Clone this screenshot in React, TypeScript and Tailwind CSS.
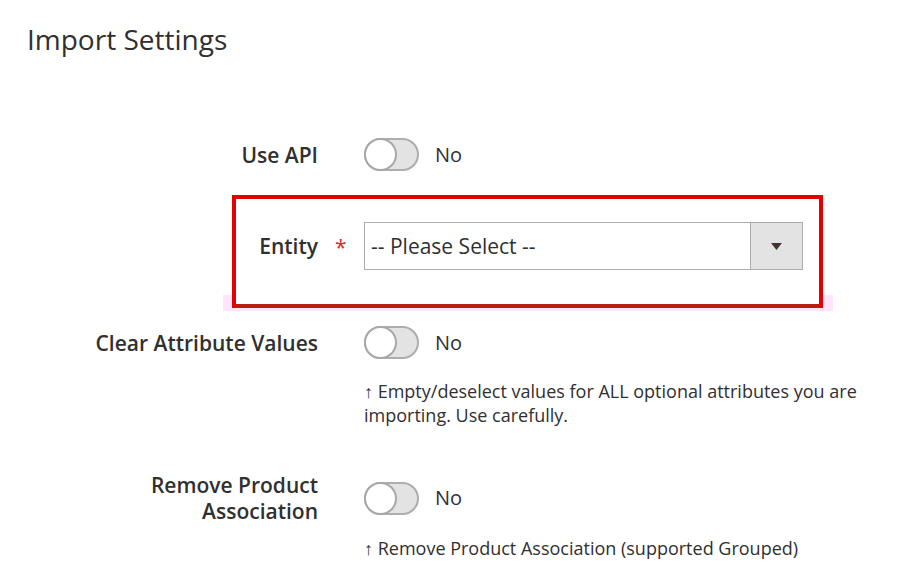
import React from "react";

const font = { fontFamily: '"Open Sans", "Noto Sans", Arial, sans-serif' };

function Toggle() {
  return (
    <div className="flex items-center">
      <div className="flex items-center w-[55px] h-[33px] rounded-full border-2 border-[#adadad] bg-[#e3e3e3]">
        <div className="-ml-[2px] w-[33px] h-[33px] rounded-full bg-white border-2 border-[#a8a8a8]" />
      </div>
      <span className="ml-[16px] text-[20px] text-[#303030] leading-none">No</span>
    </div>
  );
}

function Label({ children }: { children: React.ReactNode }) {
  return (
    <div className="w-[318px] shrink-0 text-right text-[21px] font-semibold text-[#303030] leading-[26px]">
      {children}
    </div>
  );
}

function Note({ children }: { children: React.ReactNode }) {
  return (
    <div className="ml-[364px] w-[500px] text-[18px] leading-[24px] text-[#303030]">
      {children}
    </div>
  );
}

export default function App() {
  return (
    <div className="w-[909px] h-[587px] bg-white overflow-hidden relative" style={font}>
      <div className="pt-[21px] pl-[27px] text-[28px] leading-[36px] text-[#303030]">Import Settings</div>

      <div className="mt-[81px] flex items-center h-[33px]">
        <Label>Use API</Label>
        <div className="ml-[46px]">
          <Toggle />
        </div>
      </div>

      <div className="relative mt-[24px]">
        <div className="absolute left-[223px] top-[100px] w-[610px] h-[16px] bg-[#fde6fb]" />
        <div className="relative ml-[232px] w-[591px] h-[113px] bg-white border-4 border-[#e30000] border-b-[#b3200c] pt-[23px] flex items-start">
          <div className="w-[82px] shrink-0 text-right text-[21px] font-semibold text-[#303030] leading-[48px] relative">
            Entity
            <span className="absolute left-[99px] top-[1px] text-[#e22626] font-normal">*</span>
          </div>
          <div className="ml-[46px] w-[439px] h-[48px] border border-[#adadad] flex items-stretch">
            <div className="flex-1 pl-[6px] text-[21px] text-[#303030] leading-[46px]">-- Please Select --</div>
            <div className="w-[52px] bg-[#e3e3e3] border-l border-[#adadad] flex items-center justify-center">
              <svg width="11" height="7" viewBox="0 0 11 7">
                <path d="M0 0 L11 0 L5.5 7 Z" fill="#41362f" />
              </svg>
            </div>
          </div>
        </div>
      </div>

      <div className="mt-[18px] flex items-center h-[33px]">
        <Label>Clear Attribute Values</Label>
        <div className="ml-[46px]">
          <Toggle />
        </div>
      </div>
      <div className="mt-[20px]">
        <Note>↑ Empty/deselect values for ALL optional attributes you are importing. Use carefully.</Note>
      </div>

      <div className="mt-[45px] flex items-center">
        <Label>
          Remove Product
          <br />
          Association
        </Label>
        <div className="ml-[46px]">
          <Toggle />
        </div>
      </div>
      <div className="mt-[12px]">
        <Note>↑ Remove Product Association (supported Grouped)</Note>
      </div>
    </div>
  );
}
